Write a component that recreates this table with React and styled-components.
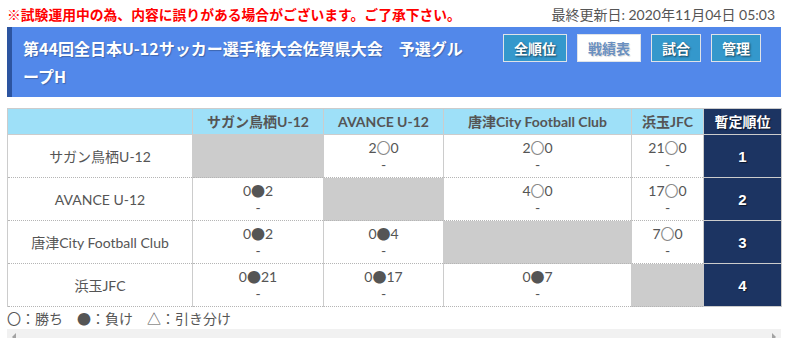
import React from "react";
import styled, { createGlobalStyle } from "styled-components";

const Global = createGlobalStyle`
  html, body { margin: 0; padding: 0; background: #fff; }
  body { font-family: "Lato", "Noto Sans CJK JP", sans-serif; color: #555; }
  * { box-sizing: border-box; }
`;

const Page = styled.div`
  padding: 0 5px 0 7px;
`;

const TopBar = styled.div`
  display: flex;
  justify-content: space-between;
  align-items: center;
  height: 27px;
  padding-right: 6px;
`;

const Notice = styled.div`
  color: #f00;
  font-weight: bold;
  font-size: 13.8px;
  font-family: "Noto Sans CJK JP", sans-serif;
`;

const Updated = styled.div`
  color: #555;
  font-size: 14px;
`;

const Header = styled.div`
  display: flex;
  align-items: flex-start;
  background: #5288ea;
  border-left: 5px solid #2c54a0;
  padding: 7px 20px 7px 11px;
`;

const Title = styled.h1`
  margin: 0;
  width: 445px;
  font-size: 16px;
  line-height: 28px;
  font-weight: bold;
  color: #fff;
  font-family: "Noto Sans CJK JP", sans-serif;
  text-shadow: 1px 1px 1px rgba(0, 0, 0, 0.25);
`;

const Buttons = styled.div`
  display: flex;
  gap: 10px;
  margin-left: auto;
`;

const Button = styled.a`
  display: block;
  height: 28px;
  line-height: 26px;
  padding: 0 10px;
  border: 1px solid #dfe3e8;
  background: ${(p) => (p.$active ? "#fff" : "#3498cc")};
  color: ${(p) => (p.$active ? "#6b90c0" : "#fff")};
  font-size: 14px;
  font-weight: bold;
  font-family: "Noto Sans CJK JP", sans-serif;
  text-shadow: ${(p) =>
    p.$active ? "1px 1px 1px rgba(0,0,0,0.15)" : "1px 1px 2px rgba(0,0,0,0.6)"};
  cursor: pointer;
`;

const ScrollBox = styled.div`
  margin-top: 11px;
  width: 774px;
`;

const ScrollTrack = styled.div`
  display: flex;
  justify-content: space-between;
  align-items: center;
  height: 15px;
  background: #f1f1f1;
  padding: 0 5px;
`;

const Arrow = styled.span`
  width: 0;
  height: 0;
  border-top: 4px solid transparent;
  border-bottom: 4px solid transparent;
  ${(p) =>
    p.$dir === "left"
      ? "border-right: 4px solid #a3a3a3;"
      : "border-left: 4px solid #a3a3a3;"}
`;

const Table = styled.table`
  width: 774px;
  table-layout: fixed;
  border-collapse: collapse;
  font-size: 14px;
  line-height: 17px;
  color: #555;
`;

const Th = styled.th`
  background: ${(p) => (p.$rank ? "#1c3462" : "#9ee0f8")};
  color: ${(p) => (p.$rank ? "#fff" : "#555")};
  border: 1px solid #ccc;
  padding: 4px 2px;
  font-weight: bold;
  text-align: center;
  font-family: ${(p) =>
    p.$rank ? '"Noto Sans CJK JP", sans-serif' : '"Lato", "Noto Sans CJK JP", sans-serif'};
  text-shadow: ${(p) => (p.$rank ? "1px 1px 1px rgba(0,0,0,0.6)" : "none")};
`;

const Td = styled.td`
  border-left: 1px solid #ccc;
  border-right: 1px solid #ccc;
  border-top: 1px dotted #b5b5b5;
  border-bottom: 1px dotted #b5b5b5;
  padding: 4px 2px;
  text-align: center;
  vertical-align: ${(p) => (p.$name ? "middle" : "top")};
  background: ${(p) => (p.$self ? "#cccccc" : "#fff")};
`;

const RankTd = styled.td`
  border: 1px solid #ccc;
  background: #1c3462;
  color: #fff;
  text-align: center;
  vertical-align: middle;
  font-family: "Liberation Sans", Arial, sans-serif;
  font-weight: bold;
  font-size: 15px;
  text-shadow: 1px 1px 1px rgba(0, 0, 0, 0.6);
`;

const Score = styled.div``;
const Sub = styled.div``;

const Mark = styled.span`
  font-family: "Noto Sans CJK JP", sans-serif;
  color: ${(p) => (p.$win ? "#888" : "#555")};
`;

const Legend = styled.div`
  font-size: 14px;
  line-height: 22px;
  color: #555;
  font-family: "Noto Sans CJK JP", sans-serif;
`;

const teams = ["サガン鳥栖U-12", "AVANCE U-12", "唐津City Football Club", "浜玉JFC"];

const results = [
  [null, [2, 0], [2, 0], [21, 0]],
  [[0, 2], null, [4, 0], [17, 0]],
  [[0, 2], [0, 4], null, [7, 0]],
  [[0, 21], [0, 17], [0, 7], null],
];

function ScoreLine({ a, b }) {
  const win = a > b;
  return (
    <Score>
      {a}
      <Mark $win={win}>{win ? "〇" : "●"}</Mark>
      {b}
    </Score>
  );
}

export default function App() {
  return (
    <Page>
      <Global />
      <TopBar>
        <Notice>※試験運用中の為、内容に誤りがある場合がございます。ご了承下さい。</Notice>
        <Updated>最終更新日: 2020年11月04日 05:03</Updated>
      </TopBar>
      <Header>
        <Title>第44回全日本U-12サッカー選手権大会佐賀県大会　予選グループH</Title>
        <Buttons>
          <Button>全順位</Button>
          <Button $active>戦績表</Button>
          <Button>試合</Button>
          <Button>管理</Button>
        </Buttons>
      </Header>
      <ScrollBox>
        <Table>
          <colgroup>
            <col style={{ width: 185 }} />
            <col style={{ width: 131 }} />
            <col style={{ width: 120 }} />
            <col style={{ width: 188 }} />
            <col style={{ width: 72 }} />
            <col style={{ width: 78 }} />
          </colgroup>
          <thead>
            <tr>
              <Th />
              {teams.map((t) => (
                <Th key={t}>{t}</Th>
              ))}
              <Th $rank>暫定順位</Th>
            </tr>
          </thead>
          <tbody>
            {teams.map((t, i) => (
              <tr key={t}>
                <Td $name>{t}</Td>
                {results[i].map((r, j) =>
                  r === null ? (
                    <Td key={j} $self />
                  ) : (
                    <Td key={j}>
                      <ScoreLine a={r[0]} b={r[1]} />
                      <Sub>-</Sub>
                    </Td>
                  )
                )}
                <RankTd>{i + 1}</RankTd>
              </tr>
            ))}
          </tbody>
        </Table>
        <Legend>〇：勝ち　●：負け　△：引き分け</Legend>
        <ScrollTrack>
          <Arrow $dir="left" />
          <Arrow $dir="right" />
        </ScrollTrack>
      </ScrollBox>
    </Page>
  );
}
